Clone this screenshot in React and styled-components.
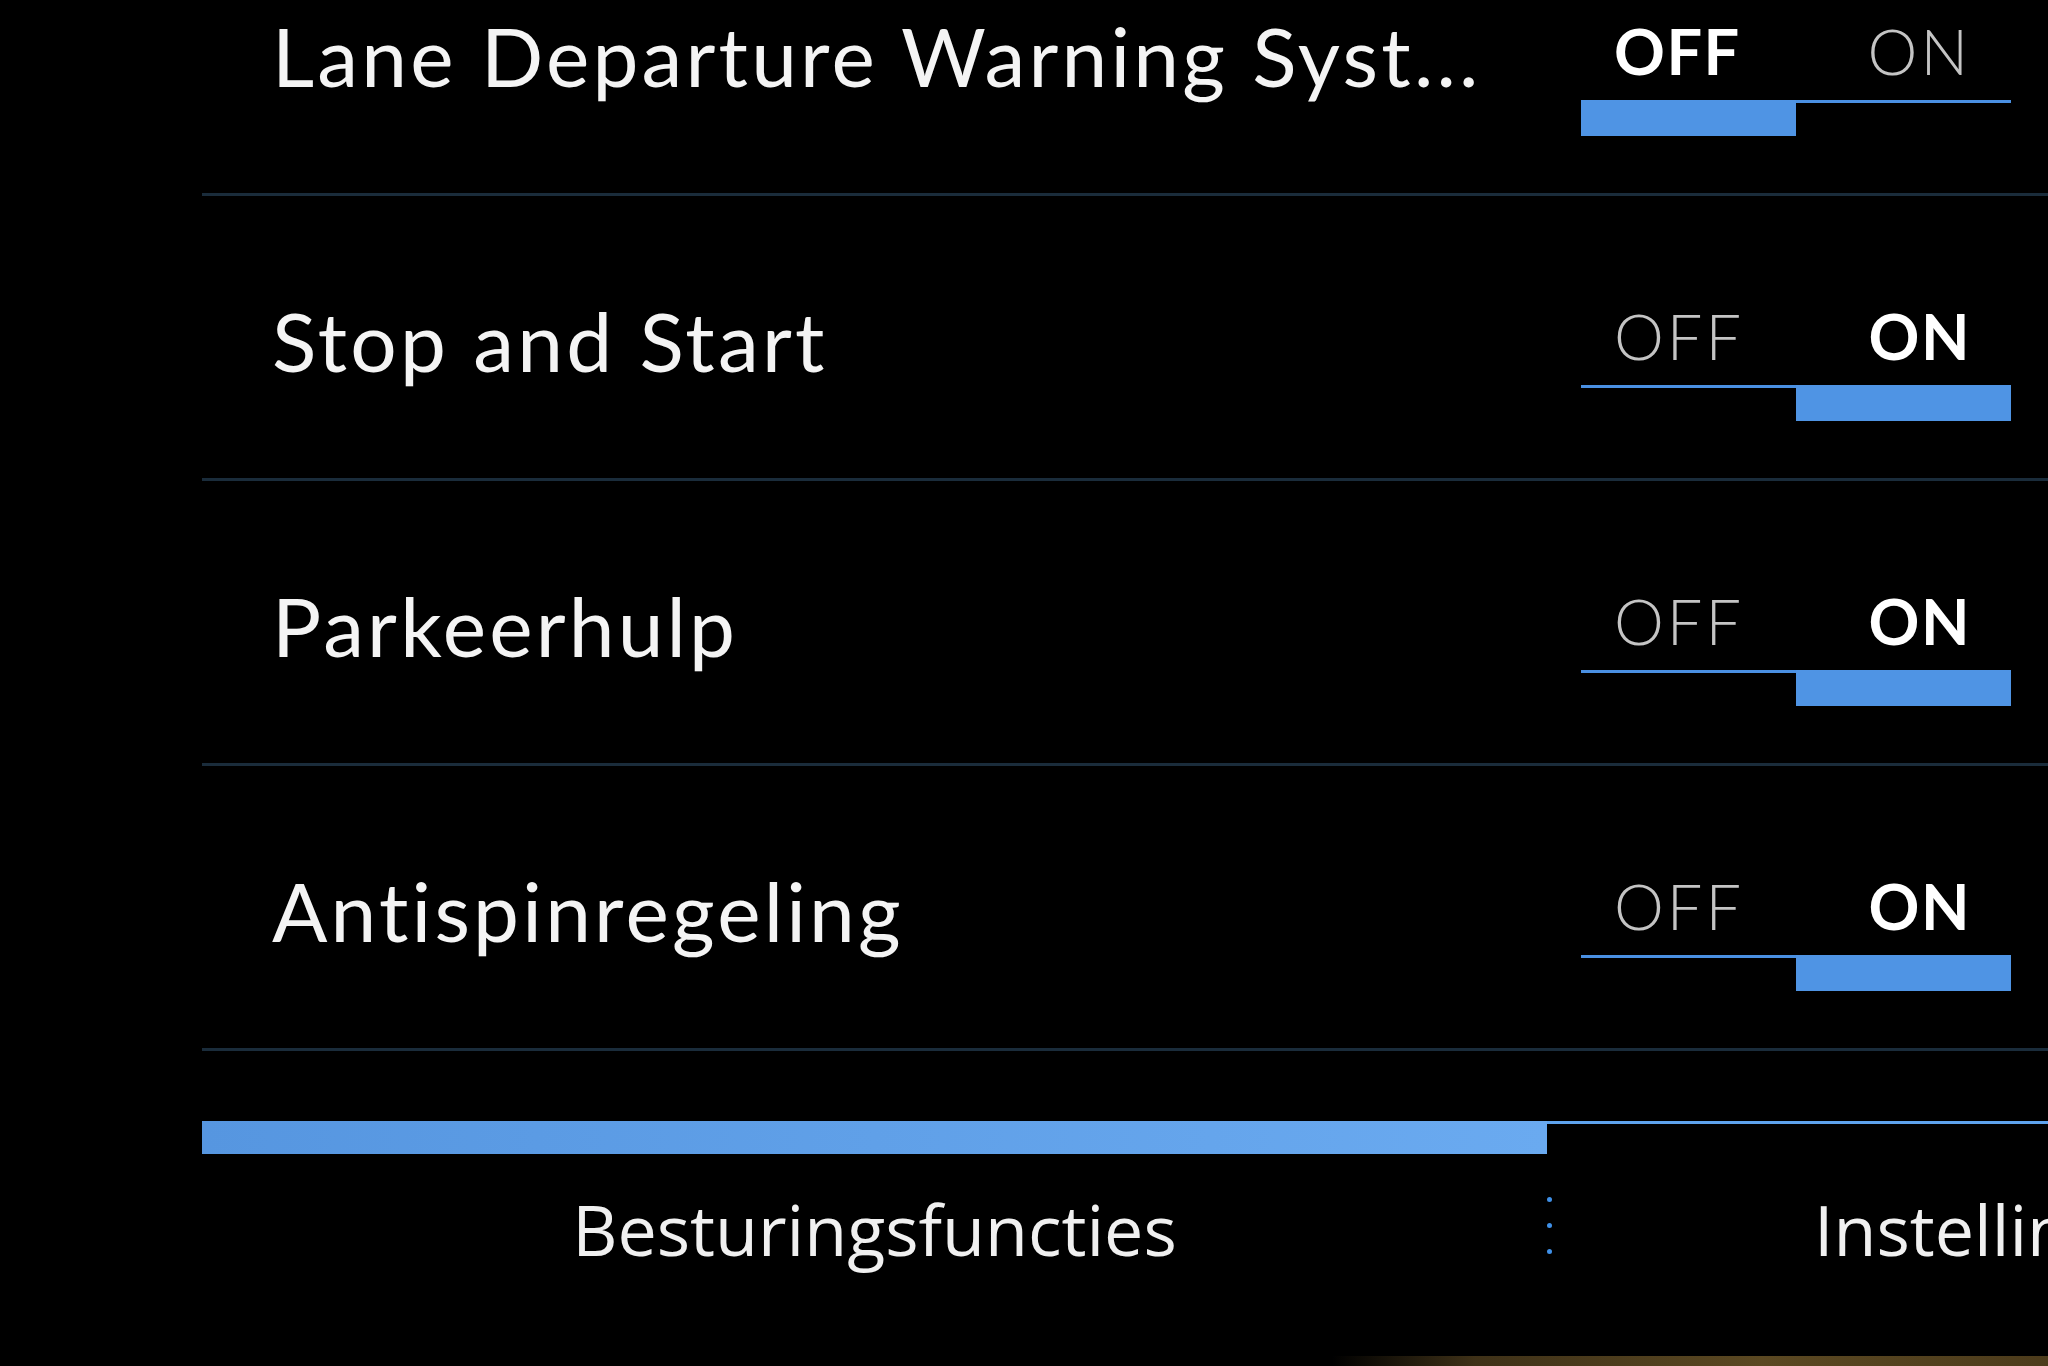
import React from "react"
import styled, { createGlobalStyle } from "styled-components"

const GlobalStyle = createGlobalStyle`
  html, body {
    margin: 0;
    padding: 0;
    background: #000;
    overflow: hidden;
  }
  * { box-sizing: border-box; }
`

const Screen = styled.div`
  width: 2048px;
  height: 1366px;
  background: #000;
  overflow: hidden;
  display: flex;
  flex-direction: column;
  padding-left: 202px;
  font-family: Lato, "Open Sans", sans-serif;
  color: #f4f4f4;
`

const List = styled.div`
  display: flex;
  flex-direction: column;
  margin-top: -89px;
`

const Row = styled.div`
  height: 285px;
  display: flex;
  align-items: center;
  padding-left: 70px;
  padding-right: 37px;
  border-bottom: 3px solid #1a2c3b;
`

const Title = styled.div`
  font-size: 82px;
  font-weight: 400;
  padding-top: 6px;
  white-space: nowrap;
  letter-spacing: 3.2px;
`

const Toggle = styled.div`
  margin-left: auto;
  margin-top: 52px;
  width: 430px;
  display: flex;
  flex-direction: column;
`

const Labels = styled.div`
  display: flex;
  justify-content: space-between;
  padding: 0 40px 0 33px;
  height: 62px;
  line-height: 62px;
`

const Label = styled.span`
  font-size: 63px;
  font-weight: ${(p) => (p.$active ? 700 : 300)};
  color: ${(p) => (p.$active ? "#ffffff" : "#c4c4c4")};
  letter-spacing: ${(p) => (p.$active ? "1.5px" : "3px")};
`

const Track = styled.div`
  margin-top: 18px;
  display: grid;
  grid-template-columns: 1fr 1fr;
  align-items: start;
`

const Half = styled.div`
  height: ${(p) => (p.$active ? "36px" : "3px")};
  background: ${(p) => (p.$active ? "#4f94e4" : "#4a90e2")};
`

const TabBar = styled.div`
  margin-top: 70px;
  display: flex;
  flex-direction: column;
`

const Indicator = styled.div`
  display: grid;
  grid-template-columns: 1345px 1fr;
  align-items: start;
`

const IndicatorPart = styled.div`
  height: ${(p) => (p.$active ? "33px" : "3px")};
  background: ${(p) =>
    p.$active ? "linear-gradient(90deg, #5696e0, #6aaaf0)" : "#5ea3ee"};
`

const Tabs = styled.div`
  height: 150px;
  display: flex;
  align-items: center;
`

const Tab = styled.div`
  width: ${(p) => (p.$width ? p.$width + "px" : "auto")};
  flex: ${(p) => (p.$width ? "none" : "1")};
  text-align: ${(p) => (p.$width ? "center" : "left")};
  padding-left: ${(p) => (p.$width ? "0" : "262px")};
  font-family: "Open Sans", "DejaVu Sans", sans-serif;
  font-size: 70px;
  font-weight: 400;
  color: #f0f0f0;
  white-space: nowrap;
  overflow: hidden;
`

const Dots = styled.div`
  width: 5px;
  display: flex;
  flex-direction: column;
  gap: 21px;
  margin-top: -8px;
`

const Dot = styled.span`
  width: 5px;
  height: 5px;
  border-radius: 50%;
  background: #3f90e8;
`

const Trim = styled.div`
  margin-top: auto;
  margin-left: 1130px;
  height: 10px;
  background: linear-gradient(
    90deg,
    rgba(60, 45, 20, 0) 0%,
    #4a3a1c 20%,
    #6b5528 60%,
    #5a4620 100%
  );
  opacity: 0.85;
`

const settings = [
  { title: "Lane Departure Warning Syst...", on: false },
  { title: "Stop and Start", on: true },
  { title: "Parkeerhulp", on: true },
  { title: "Antispinregeling", on: true },
]

export default function App() {
  return (
    <>
      <GlobalStyle />
      <Screen>
        <List>
          {settings.map((s) => (
            <Row key={s.title}>
              <Title>{s.title}</Title>
              <Toggle>
                <Labels>
                  <Label $active={!s.on}>OFF</Label>
                  <Label $active={s.on}>ON</Label>
                </Labels>
                <Track>
                  <Half $active={!s.on} />
                  <Half $active={s.on} />
                </Track>
              </Toggle>
            </Row>
          ))}
        </List>
        <TabBar>
          <Indicator>
            <IndicatorPart $active />
            <IndicatorPart />
          </Indicator>
          <Tabs>
            <Tab $width={1345}>Besturingsfuncties</Tab>
            <Dots>
              <Dot />
              <Dot />
              <Dot />
            </Dots>
            <Tab>Instellingen</Tab>
          </Tabs>
        </TabBar>
        <Trim />
      </Screen>
    </>
  )
}
